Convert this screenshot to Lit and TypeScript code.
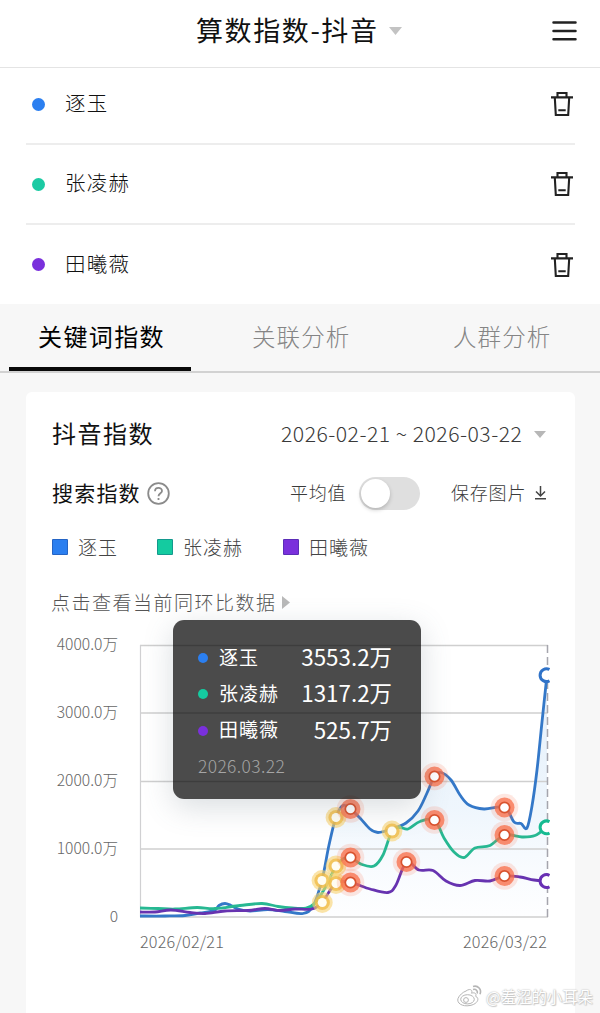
import { LitElement, html, css, svg } from "lit";
import { customElement, property } from "lit/decorators.js";

type Pt = [number, number];

const KEYWORDS = [
  { name: "逐玉", color: "blue", value: "3553.2万" },
  { name: "张凌赫", color: "green", value: "1317.2万" },
  { name: "田曦薇", color: "purple", value: "525.7万" },
];

const BLUE_LINE: Pt[] = [
  [140, 916], [165, 916], [185, 915.5], [200, 913], [214, 910.5], [219, 905.5], [225, 903.5], [231, 905.5], [238, 909],
  [250, 911], [268, 909.5], [285, 911.5], [303, 913.5], [313, 906], [322, 880], [329, 845], [336, 817], [343, 805.5],
  [350.5, 809], [360, 818], [370, 829], [378, 832.5], [392, 829], [406, 823], [418, 811], [427, 793], [434.5, 776],
  [441, 772.5], [451, 780], [460, 795], [469, 805], [484, 809], [504.5, 807.5], [514, 822], [521, 823.5], [527, 828],
  [532, 806], [537, 770], [542, 722], [547, 675],
];
const GREEN_LINE: Pt[] = [
  [140, 908], [158, 908.5], [175, 909], [197, 907.5], [215, 908.5], [240, 905.5], [262, 903.5], [278, 906.5],
  [292, 908], [306, 908], [315, 903], [325, 888], [336, 866], [343, 859], [350.5, 857.5], [362, 864.5], [374, 866],
  [383, 855], [392, 831], [400, 827.5], [408, 829], [420, 821.5], [434.5, 820], [444, 838], [454, 852], [464, 857.5],
  [475, 848], [490, 845.5], [504.5, 835], [522, 837], [535, 835.5], [547, 827],
];
const PURPLE_LINE: Pt[] = [
  [140, 912], [155, 912], [171, 910], [190, 912.5], [205, 913.5], [225, 911], [248, 910.5], [265, 908.5], [280, 910.5],
  [295, 909], [312, 909], [322, 902.5], [336, 883], [350.5, 882.5], [370, 889], [388, 892.5], [396, 885], [406.5, 862],
  [419, 870], [433, 870.5], [446, 881], [460, 885.5], [475, 880.5], [490, 881], [504.5, 876], [520, 877], [534, 880], [547, 881],
];
const ORANGE_MARKS: Pt[] = [
  [350.5, 809], [434.5, 776.5], [504.5, 807.5], [350.5, 857.5], [434.5, 820],
  [504.5, 835], [350.5, 882.5], [406.5, 862], [504.5, 876],
];
const YELLOW_MARKS: Pt[] = [[336, 817.5], [322, 880.5], [336, 866], [336, 883.5], [322.3, 902.5], [392, 831]];

function smooth(points: Pt[]): string {
  let d = `M${points[0][0]} ${points[0][1]}`;
  for (let i = 0; i < points.length - 1; i++) {
    const a = points[Math.max(0, i - 1)];
    const b = points[i];
    const c = points[i + 1];
    const e = points[Math.min(points.length - 1, i + 2)];
    d += `C${b[0] + (c[0] - a[0]) / 6} ${b[1] + (c[1] - a[1]) / 6} ${c[0] - (e[0] - b[0]) / 6} ${c[1] - (e[1] - b[1]) / 6} ${c[0]} ${c[1]}`;
  }
  return d;
}

@customElement("trend-chart")
export class TrendChart extends LitElement {
  static styles = css`
    :host { display: block; flex: none; }
    svg { display: block; }
  `;

  render() {
    const area = smooth(BLUE_LINE) + "L547 917L140 917Z";
    return html`<svg width="411" height="282" viewBox="139 640 411 282">
      <defs>
        <linearGradient id="fill" x1="0" y1="0" x2="0" y2="1">
          <stop offset="0" stop-color="#dcebfa" stop-opacity=".75"></stop>
          <stop offset=".55" stop-color="#e9f3fc" stop-opacity=".75"></stop>
          <stop offset="1" stop-color="#fcfdff" stop-opacity=".5"></stop>
        </linearGradient>
      </defs>
      <path d=${area} fill="url(#fill)"></path>
      ${[645.5, 713, 781.5, 849, 917].map((y) => svg`<path d="M140 ${y}H548" stroke="#cfcfcf" stroke-width="1.3"/>`)}
      <path d="M140.5 645V917" stroke="#d0d0d2" stroke-width="1.2"></path>
      <path d="M547.5 645V917" stroke="#a5a5ad" stroke-width="1.5" stroke-dasharray="8 4"></path>
      <g fill="none" stroke-width="2.8" stroke-linejoin="round">
        <path d=${smooth(BLUE_LINE)} stroke="#3478c8"></path>
        <path d=${smooth(GREEN_LINE)} stroke="#27b892"></path>
        <path d=${smooth(PURPLE_LINE)} stroke="#6733b0"></path>
      </g>
      ${YELLOW_MARKS.map(([x, y]) => svg`
        <circle cx=${x} cy=${y} r="10.4" fill="#f8d26e" opacity=".6"/>
        <circle cx=${x} cy=${y} r="7.6" fill="#f0bb45" opacity=".75"/>
        <circle cx=${x} cy=${y} r="4.5" fill="#fffdf2"/>`)}
      ${ORANGE_MARKS.map(([x, y]) => svg`
        <circle cx=${x} cy=${y} r="13.8" fill="#fa704f" opacity=".17"/>
        <circle cx=${x} cy=${y} r="10" fill="#f86d48" opacity=".75"/>
        <circle cx=${x} cy=${y} r="5.2" fill="#fff" stroke="#d9532f" stroke-width="1.7"/>`)}
      <g fill="#fff" stroke-width="3">
        <path d="M549.5 669.5A6.4 6.4 0 1 0 549.5 680.8" stroke="#2f72c8"></path>
        <path d="M549.5 821.7A6.4 6.4 0 1 0 549.5 833" stroke="#16bb91"></path>
        <path d="M549.5 875.4A6.4 6.4 0 1 0 549.5 886.7" stroke="#6930b4"></path>
      </g>
    </svg>`;
  }
}

@customElement("keyword-row")
export class KeywordRow extends LitElement {
  @property() name = "";
  @property() color = "blue";

  static styles = css`
    :host { display: flex; align-items: center; height: 80px; padding: 0 2px 0 6px; box-sizing: border-box; }
    .dot { width: 13px; height: 13px; border-radius: 50%; }
    .blue { background: #2b7ff0; }
    .green { background: #1bcaa3; }
    .purple { background: #7a30dc; }
    .name { margin-left: 20px; flex: 1; font-size: 20.5px; letter-spacing: 1.2px; line-height: 24px; padding-bottom: 4px; color: #111; }
    svg { display: block; }
  `;

  render() {
    return html`
      <span class="dot ${this.color}"></span>
      <span class="name">${this.name}</span>
      <svg width="22" height="26" viewBox="0 0 22 26" fill="none" stroke="#222" stroke-width="2.1">
        <path d="M0 6.4H22M6.5 6V2H15.5V6M3.8 6.5L4.8 24H17.2L18.2 6.5M7.3 19.3H14.7"></path>
      </svg>
    `;
  }
}

@customElement("app-root")
export class AppRoot extends LitElement {
  static styles = css`
    :host {
      display: block; width: 600px; height: 1013px; overflow: hidden; position: relative;
      background: #f7f7f7; color: #111; font-weight: 300; white-space: nowrap;
      font-family: "Noto Sans CJK SC", sans-serif;
    }
    svg { display: block; flex: none; }
    header { display: flex; align-items: center; height: 68px; padding: 0 23px 6px 196px; box-sizing: border-box; background: #fff; border-bottom: 1px solid #e4e4e4; }
    .title { font-size: 27px; letter-spacing: 1.6px; line-height: 40px; width: 193px; font-weight: 400; padding-bottom: 2px; }
    .burger { margin-left: auto; }
    .list { background: #fff; padding: 0 25px 0 26px; height: 236px; }
    keyword-row { border-bottom: 2px solid #ededed; }
    keyword-row:first-child { height: 77px; padding-bottom: 3px; }
    keyword-row:last-child { border: 0; height: 79px; }
    .tabs { display: flex; height: 69px; box-sizing: border-box; border-bottom: 2px solid #d2d2d2; padding-left: 9px; }
    .tab { font-size: 23.5px; letter-spacing: 1.1px; line-height: 64px; color: #858585; height: 67px; box-sizing: border-box; }
    .tab.active { width: 182px; padding-left: 29px; font-size: 24px; letter-spacing: 1.4px; border-bottom: 4px solid #0a0a0a; color: #000; font-weight: 400; }
    .second { margin-left: 61px; width: 201px; }
    .card { position: relative; margin: 19px 25px 0 26px; height: 640px; background: #fff; border-radius: 6px; box-sizing: border-box; padding: 20px 26px 0; }
    .line { display: flex; align-items: center; }
    .head { height: 40px; }
    .head svg { margin-top: 4px; }
    .h1 { font-size: 24px; letter-spacing: 1.5px; font-weight: 400; width: 229px; }
    .dates { font-size: 21.2px; letter-spacing: .48px; color: #3a3a3a; width: 253px; }
    .controls { height: 34px; margin-top: 24px; }
    .h2 { font-size: 21px; letter-spacing: 1.2px; width: 95px; font-weight: 400; padding-bottom: 3px; }
    .small { font-size: 18px; letter-spacing: .8px; color: #3a3a3a; padding-bottom: 3px; }
    .avg { margin-left: 120px; width: 69px; }
    .toggle { width: 61px; height: 33px; border-radius: 17px; background: #dfdfdf; padding: 2px; box-sizing: border-box; }
    .knob { width: 29px; height: 29px; border-radius: 50%; background: #fff; box-shadow: 0 2px 4px rgba(0,0,0,.2); }
    .save { margin-left: 31px; width: 83px; }
    .legend { height: 30px; margin-top: 22px; }
    .sw { width: 16px; height: 16px; border-radius: 1px; box-sizing: border-box; margin-right: 10px; border: 1px solid rgba(20,40,100,.3); }
    .item { display: flex; align-items: center; font-size: 19px; letter-spacing: 1px; line-height: 26px; color: #444; width: 105px; }
    .item + .item { width: 126px; }
    .blue { background: #2b7ff0; }
    .green { background: #14cba0; }
    .purple { background: #7a30dc; }
    .compare { height: 30px; margin-top: 25px; font-size: 19px; letter-spacing: 1.5px; color: #555; gap: 5px; }
    .compare span { margin-left: -1px; padding-bottom: 2px; }
    .plot { display: flex; margin-top: 23px; }
    .axis { flex: none; width: 66px; height: 282px; margin-right: 21px; box-sizing: border-box; font-size: 15.6px; color: #666; text-align: right; }
    .tick { height: 67.9px; line-height: 6px; }
    .xaxis { display: flex; justify-content: space-between; padding: 7px 2px 0 88px; font-size: 16.2px; letter-spacing: .2px; line-height: 24px; color: #666; }
    .tooltip {
      position: absolute; left: 147px; top: 228px; width: 248px; height: 179px; box-sizing: border-box;
      border-radius: 11px; background: rgba(0,0,0,.705); padding: 18px 29px 0 25px; color: #fff; font-weight: 400;
      box-shadow: 0 8px 30px rgba(80,100,115,.22);
    }
    .trow { display: flex; align-items: center; height: 36.3px; }
    .tdot { width: 10px; height: 10px; border-radius: 50%; margin: 4px 11px 0 0; }
    .tname { font-size: 19px; letter-spacing: 1px; flex: 1; }
    .tval { font-size: 22.4px; }
    .tdate { font-size: 17.4px; line-height: 36px; color: #a5a5a5; font-weight: 300; letter-spacing: .4px; padding-top: 1px; }
    .mark {
      position: absolute; right: 7px; bottom: 5px; display: flex; align-items: center; gap: 3px;
      font-size: 15.4px; line-height: 24px; font-weight: 400; color: #fff;
      text-shadow: 0 0 1px #bbb, 0 0 2px #c4c4c4, 1px 1px 1px #ccc;
    }
  `;

  render() {
    return html`
      <header>
        <span class="title">算数指数-抖音</span>
        <svg width="13" height="8" viewBox="0 0 13 8"><path d="M0 0H13L6.5 8Z" fill="#c3c3c3"></path></svg>
        <svg class="burger" width="25" height="22" viewBox="0 0 25 22" stroke="#222" stroke-width="2.5" stroke-linecap="round"><path d="M1.5 2.5H23.5M1.5 11H23.5M1.5 19.3H23.5"></path></svg>
      </header>
      <section class="list">
        ${KEYWORDS.map((k) => html`<keyword-row name=${k.name} color=${k.color}></keyword-row>`)}
      </section>
      <nav class="tabs">
        <span class="tab active">关键词指数</span>
        <span class="tab second">关联分析</span>
        <span class="tab">人群分析</span>
      </nav>
      <main class="card">
        <div class="line head">
          <span class="h1">抖音指数</span>
          <span class="dates">2026-02-21 ~ 2026-03-22</span>
          <svg width="12" height="7" viewBox="0 0 12 7"><path d="M0 0H12L6 7Z" fill="#b7b7b7"></path></svg>
        </div>
        <div class="line controls">
          <span class="h2">搜索指数</span>
          <svg width="23" height="23" viewBox="0 0 23 23" fill="none" stroke="#8b8b8b" stroke-width="1.8">
            <circle cx="11.5" cy="11.5" r="10.3"></circle>
            <path d="M8 9.2C8 4.8 15 4.8 15 9C15 11.3 11.5 11.4 11.5 14.3M11.5 16V17.9"></path>
          </svg>
          <span class="small avg">平均值</span>
          <span class="toggle"><div class="knob"></div></span>
          <span class="small save">保存图片</span>
          <svg width="13" height="14" viewBox="0 0 13 14" fill="none" stroke="#444" stroke-width="1.5"><path d="M6.5 0V9.5M2 5.5L6.5 10L11 5.5M1 12.7H12"></path></svg>
        </div>
        <div class="line legend">
          ${KEYWORDS.map((k) => html`<span class="item"><i class="sw ${k.color}"></i>${k.name}</span>`)}
        </div>
        <div class="line compare">
          <span>点击查看当前同环比数据</span>
          <svg width="8" height="13" viewBox="0 0 8 13"><path d="M0 0L8 6.5L0 13Z" fill="#b9b9b9"></path></svg>
        </div>
        <div class="plot">
          <div class="axis">
            ${["4000.0万", "3000.0万", "2000.0万", "1000.0万", "0"].map((t) => html`<div class="tick">${t}</div>`)}
          </div>
          <trend-chart></trend-chart>
        </div>
        <div class="xaxis"><span>2026/02/21</span><span>2026/03/22</span></div>
        <div class="tooltip">
          ${KEYWORDS.map((k) => html`<div class="trow"><i class="tdot ${k.color}"></i><span class="tname">${k.name}</span><span class="tval">${k.value}</span></div>`)}
          <div class="tdate">2026.03.22</div>
        </div>
      </main>
      <div class="mark">
        <svg width="27" height="24" viewBox="0 0 27 24" fill="#fff" stroke="#b5b5b5" stroke-width="1">
          <path d="M10 7C14 4 17 6 15.5 9.2C19 8 21 10 19.5 12.2C24 14 22 20 14 21.5C6 23 .5 19 2 14.5C3 11.5 7 8 10 7Z"></path>
          <ellipse cx="11.5" cy="15.3" rx="6.8" ry="4.6"></ellipse>
          <circle cx="10" cy="16" r="2.4"></circle>
          <path d="M17 5.5C20 4.6 22 7 21.2 9.5M17 2.5C22 1 26 5.5 24 10.2" fill="none" stroke-width="1.6"></path>
        </svg>
        <span>@羞涩的小耳朵</span>
      </div>
    `;
  }
}
